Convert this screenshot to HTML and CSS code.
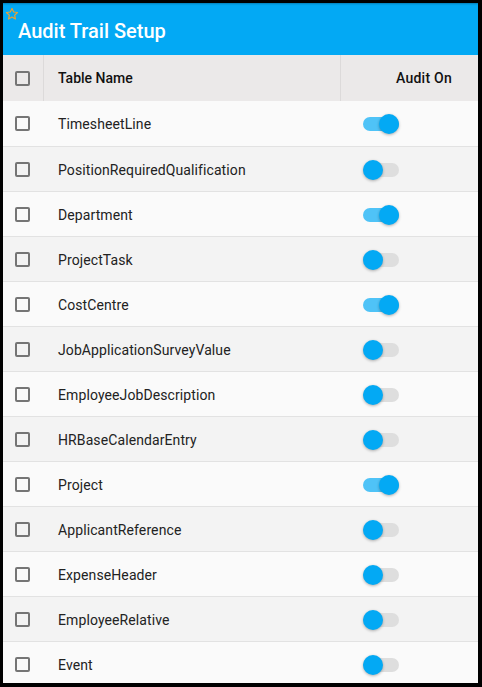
FILE: index.html
```html
<!DOCTYPE html>
<html>
<head>
<meta charset="utf-8">
<link rel="stylesheet" href="styles.css">
</head>
<body>
<div class="frame">
  <header class="appbar">
    <svg class="star" viewBox="0 0 24 24" width="14" height="14"><path d="M12 2.5l2.9 6.1 6.6.8-4.9 4.6 1.3 6.6L12 17.3l-5.9 3.3 1.3-6.6-4.9-4.6 6.6-.8z" fill="none" stroke="#f0a12e" stroke-width="2" stroke-linejoin="round"/></svg>
    <h1 class="title">Audit Trail Setup</h1>
  </header>
  <div class="grid">
    <div class="hcell chk"><span class="box"></span></div>
    <div class="hcell name">Table Name</div>
    <div class="hcell audit">Audit On</div>
  </div>
  <div class="rows">
    <div class="row"><div class="chk"><span class="box"></span></div><div class="name">TimesheetLine</div><div class="audit"><span class="toggle on"></span></div></div>
    <div class="row"><div class="chk"><span class="box"></span></div><div class="name">PositionRequiredQualification</div><div class="audit"><span class="toggle"></span></div></div>
    <div class="row"><div class="chk"><span class="box"></span></div><div class="name">Department</div><div class="audit"><span class="toggle on"></span></div></div>
    <div class="row"><div class="chk"><span class="box"></span></div><div class="name">ProjectTask</div><div class="audit"><span class="toggle"></span></div></div>
    <div class="row"><div class="chk"><span class="box"></span></div><div class="name">CostCentre</div><div class="audit"><span class="toggle on"></span></div></div>
    <div class="row"><div class="chk"><span class="box"></span></div><div class="name">JobApplicationSurveyValue</div><div class="audit"><span class="toggle"></span></div></div>
    <div class="row"><div class="chk"><span class="box"></span></div><div class="name">EmployeeJobDescription</div><div class="audit"><span class="toggle"></span></div></div>
    <div class="row"><div class="chk"><span class="box"></span></div><div class="name">HRBaseCalendarEntry</div><div class="audit"><span class="toggle"></span></div></div>
    <div class="row"><div class="chk"><span class="box"></span></div><div class="name">Project</div><div class="audit"><span class="toggle on"></span></div></div>
    <div class="row"><div class="chk"><span class="box"></span></div><div class="name">ApplicantReference</div><div class="audit"><span class="toggle"></span></div></div>
    <div class="row"><div class="chk"><span class="box"></span></div><div class="name">ExpenseHeader</div><div class="audit"><span class="toggle"></span></div></div>
    <div class="row"><div class="chk"><span class="box"></span></div><div class="name">EmployeeRelative</div><div class="audit"><span class="toggle"></span></div></div>
    <div class="row"><div class="chk"><span class="box"></span></div><div class="name">Event</div><div class="audit"><span class="toggle"></span></div></div>
  </div>
</div>
</body>
</html>
```
FILE: styles.css
```css
html, body {
  margin: 0;
  padding: 0;
  background: #000;
}
body {
  padding: 3px 4px 4px 3px;
  font-family: Roboto, "Liberation Sans", sans-serif;
}
.frame {
  width: 475px;
  height: 680px;
  overflow: hidden;
  background: #fafafa;
  position: relative;
}
.appbar {
  height: 52px;
  background: #03a9f4;
  position: relative;
  display: flex;
  align-items: center;
  box-shadow: inset 0 2px 2px -1px rgba(0,0,0,0.25);
}
.star {
  position: absolute;
  left: 2px;
  top: 4px;
}
.title {
  margin: 0 0 0 15px;
  padding-top: 3px;
  color: #fff;
  font-size: 20px;
  font-weight: 500;
  letter-spacing: 0;
}
.grid, .row {
  display: grid;
  grid-template-columns: 41px 297px 1fr;
}
.grid {
  height: 46px;
  background: #ebe9e9;
  font-size: 14px;
  font-weight: 500;
  color: #111;
}
.hcell {
  display: flex;
  align-items: center;
}
.hcell.chk, .hcell.name {
  border-right: 1px solid #dcdada;
}
.hcell.chk { padding-top: 1px; }
.hcell.name { padding-left: 14px; }
.hcell.audit {
  justify-content: flex-end;
  padding-right: 26px;
  letter-spacing: 0.25px;
}
.row {
  height: 44px;
  border-top: 1px solid #e2e2e2;
  align-items: center;
  font-size: 14px;
  letter-spacing: 0.1px;
  color: #222;
  background: #fafafa;
}
.row:first-child { border-top: none; height: 45px; }
.row:nth-child(even) { background: #f3f3f3; }
.chk {
  display: flex;
  align-items: center;
  padding-left: 12px;
}
.box {
  width: 11px;
  height: 11px;
  border: 2px solid #757575;
  border-radius: 2px;
  display: block;
}
.row .name { padding-left: 14px; padding-top: 1px; }
.audit { display: flex; align-items: center; }
.row .audit { padding-left: 22px; }
.toggle {
  position: relative;
  width: 36px;
  height: 14px;
  border-radius: 7px;
  background: #dedede;
  display: block;
  margin-top: 1px;
}
.toggle::after {
  content: "";
  position: absolute;
  left: 0;
  top: -3px;
  width: 20px;
  height: 20px;
  border-radius: 50%;
  background: #03a9f4;
  box-shadow: 0 1px 3px rgba(0,0,0,0.3);
}
.toggle.on { background: #4fc3f7; }
.toggle.on::after { left: 16px; }
```
